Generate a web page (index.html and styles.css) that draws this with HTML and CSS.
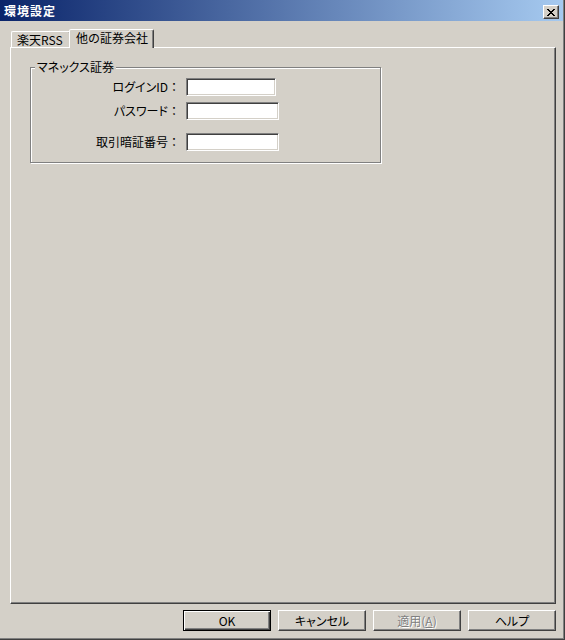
FILE: index.html
```html
<!DOCTYPE html>
<html lang="ja">
<head>
    <meta charset="UTF-8">
    <title>環境設定</title>
    <link rel="stylesheet" href="styles.css">
</head>
<body>
    <div class="window">
        <div class="titlebar">
            <span class="title">環境設定</span>
            <button class="close" type="button">
                <svg width="8" height="7" viewBox="0 0 8 7" shape-rendering="crispEdges">
                    <path d="M0 0h2v1h-2z M6 0h2v1h-2z M1 1h2v1h-2z M5 1h2v1h-2z M2 2h4v1h-4z M3 3h2v1h-2z M2 4h4v1h-4z M1 5h2v1h-2z M5 5h2v1h-2z M0 6h2v1h-2z M6 6h2v1h-2z" fill="#000"/>
                </svg>
            </button>
        </div>

        <div class="client">
            <div class="tabs">
                <div class="tab">楽天RSS</div>
                <div class="tab active">他の証券会社</div>
            </div>

            <div class="panel">
                <fieldset class="group">
                    <legend><span class="kana">マネックス証券</span></legend>
                    <div class="form">
                        <label><span class="kana">ログインID</span>：</label>
                        <input type="text" class="field short">
                        <label><span class="kana">パスワード</span>：</label>
                        <input type="password" class="field">
                        <label class="spaced">取引暗証番号：</label>
                        <input type="password" class="field spaced">
                    </div>
                </fieldset>
            </div>

            <div class="buttons">
                <button class="btn default" type="button">OK</button>
                <button class="btn" type="button"><span class="kana">キャンセル</span></button>
                <button class="btn" type="button" disabled>適用(<u>A</u>)</button>
                <button class="btn" type="button"><span class="kana">ヘルプ</span></button>
            </div>
        </div>
    </div>
</body>
</html>
```

FILE: styles.css
```css
* {
    margin: 0;
    padding: 0;
    box-sizing: border-box;
}

body {
    background: #d4d0c8;
    font-family: "Noto Sans CJK JP", "Liberation Sans", sans-serif;
    font-size: 12px;
    color: #000;
}

.kana {
    font-feature-settings: "palt";
}

.window {
    width: 565px;
    height: 640px;
    background: #d4d0c8;
    border-right: 1px solid #404040;
    border-bottom: 1px solid #404040;
    box-shadow: inset -1px -1px 0 #808080;
    display: flex;
    flex-direction: column;
}

/* title bar */
.titlebar {
    height: 21px;
    margin-right: 1px;
    padding: 0 4px;
    background: linear-gradient(90deg, #0a246a 0%, #a6caf0 100%);
    display: flex;
    align-items: center;
    justify-content: space-between;
}

.title {
    color: #fff;
    font-weight: bold;
    letter-spacing: 1px;
    line-height: 14px;
}

.close {
    width: 16px;
    height: 14px;
    margin-top: 3px;
    background: #d4d0c8;
    border: 1px solid;
    border-color: #fff #404040 #404040 #fff;
    box-shadow: inset -1px -1px 0 #808080;
    display: flex;
    align-items: center;
    justify-content: center;
}

/* client area */
.client {
    padding-left: 10px;
    display: flex;
    flex-direction: column;
}

.tabs {
    margin-top: 8px;
    height: 18px;
    padding-left: 1px;
    display: flex;
    align-items: flex-end;
}

.tab {
    height: 16px;
    width: 60px;
    padding: 1px 0 0 5px;
    line-height: 14px;
    white-space: nowrap;
    border: 1px solid;
    border-bottom: none;
    border-color: #fff #404040 transparent #fff;
    border-radius: 2px 2px 0 0;
    box-shadow: inset -1px 0 0 #808080;
}

.tab.active {
    height: 19px;
    width: 85px;
    margin-left: -2px;
    margin-bottom: -1px;
    padding-left: 6px;
    background: #d4d0c8;
    position: relative;
    z-index: 1;
}

.panel {
    width: 546px;
    height: 557px;
    padding: 12px 0 0 19px;
    border: 1px solid;
    border-color: #fff #404040 #404040 #fff;
    box-shadow: inset -1px -1px 0 #808080;
}

/* group box */
.group {
    width: 351px;
    padding: 4px 0 11px 0;
    border: 1px solid #808080;
    box-shadow: inset 1px 1px 0 #fff, 1px 1px 0 #fff;
}

.group legend {
    margin-left: 4px;
    padding: 0 2px;
    line-height: 14px;
    background: #d4d0c8;
}

.form {
    display: grid;
    grid-template-columns: 149px auto;
    column-gap: 6px;
    row-gap: 6px;
    align-items: center;
}

.form label {
    text-align: right;
    line-height: 14px;
    white-space: nowrap;
}

.form .spaced {
    margin-top: 7px;
}

.field {
    width: 93px;
    height: 18px;
    background: #fff;
    border: 1px solid;
    border-color: #808080 #fff #fff #808080;
    box-shadow: inset 1px 1px 0 #404040, inset -1px -1px 0 #d4d0c8;
    font: inherit;
    padding: 0 3px;
    outline: none;
}

.field.short {
    width: 90px;
}

/* dialog buttons */
.buttons {
    margin-top: 6px;
    padding-right: 8px;
    display: flex;
    justify-content: flex-end;
    gap: 7px;
}

.btn {
    width: 88px;
    height: 21px;
    background: #d4d0c8;
    font: inherit;
    line-height: 14px;
    color: #000;
    border: 1px solid;
    border-color: #fff #404040 #404040 #fff;
    box-shadow: inset -1px -1px 0 #808080;
}

.btn.default {
    border-color: #000;
    box-shadow: inset 1px 1px 0 #fff, inset -1px -1px 0 #404040, inset -2px -2px 0 #808080;
}

.btn:disabled {
    color: #808080;
    text-shadow: 1px 1px 0 #fff;
}
```
